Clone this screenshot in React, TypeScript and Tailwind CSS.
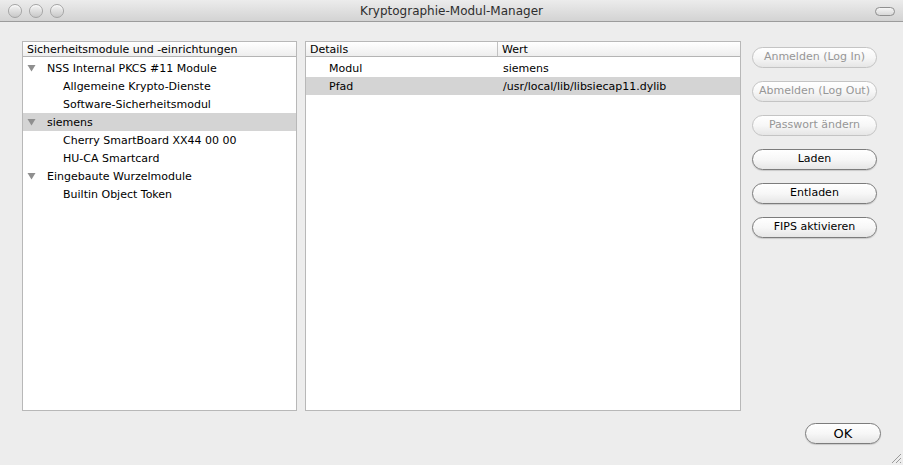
import React from "react";

const font = { fontFamily: '"DejaVu Sans", "Liberation Sans", sans-serif' };

function Tri() {
  return (
    <svg width="9" height="8" viewBox="0 0 9 8" className="shrink-0">
      <polygon points="0.5,1 8.5,1 4.5,7.5" fill="#8f8f8f" />
    </svg>
  );
}

function Light() {
  return (
    <div className="w-[14px] h-[14px] rounded-full border border-[#a4a4a4] bg-gradient-to-b from-[#f4f4f4] to-[#c9c9c9] shadow-[inset_0_1px_1px_rgba(255,255,255,0.9)]" />
  );
}

function Btn({ label, disabled }: { label: string; disabled?: boolean }) {
  return (
    <div
      className={
        "h-[21px] w-[125px] rounded-full border flex items-center justify-center text-[11px] bg-gradient-to-b from-white via-[#f7f7f7] to-[#e6e6e6] " +
        (disabled
          ? "border-[#c4c4c4] text-[#969696]"
          : "border-[#7c7c7c] text-black shadow-[0_1px_1px_rgba(0,0,0,0.15)]")
      }
    >
      {label}
    </div>
  );
}

type Row = { label: string; level: number; expander?: boolean; selected?: boolean };

const rows: Row[] = [
  { label: "NSS Internal PKCS #11 Module", level: 0, expander: true },
  { label: "Allgemeine Krypto-Dienste", level: 1 },
  { label: "Software-Sicherheitsmodul", level: 1 },
  { label: "siemens", level: 0, expander: true, selected: true },
  { label: "Cherry SmartBoard XX44 00 00", level: 1 },
  { label: "HU-CA Smartcard", level: 1 },
  { label: "Eingebaute Wurzelmodule", level: 0, expander: true },
  { label: "Builtin Object Token", level: 1 },
];

export default function App() {
  return (
    <div style={font} className="w-[903px] h-[465px] bg-[#ededed] relative overflow-hidden text-[11px] text-black">
      {/* title bar */}
      <div className="h-[22px] bg-gradient-to-b from-[#ececec] to-[#d3d3d3] border-b border-[#9c9c9c] flex items-center relative">
        <div className="flex gap-[7px] pl-[8px]">
          <Light />
          <Light />
          <Light />
        </div>
        <div className="absolute inset-0 flex items-center justify-center text-[12px] text-[#2e2e2e]">
          Kryptographie-Modul-Manager
        </div>
        <div className="absolute right-[8px] top-[7px] w-[20px] h-[9px] rounded-full border border-[#8f8f8f] bg-gradient-to-b from-[#f5f5f5] to-[#d8d8d8]" />
      </div>

      <div className="flex pt-[19px] pl-[22px]">
        {/* left tree */}
        <div className="w-[275px] h-[370px] bg-white border border-[#b8b8b8] flex flex-col">
          <div className="h-[15px] border-b border-[#b4b4b4] bg-gradient-to-b from-white to-[#eeeeee] flex items-center pl-[4px] leading-none">
            Sicherheitsmodule und -einrichtungen
          </div>
          <div className="pt-[2px]">
            {rows.map((r) => (
              <div
                key={r.label}
                className={"h-[18px] flex items-center leading-none " + (r.selected ? "bg-[#d4d4d4]" : "")}
              >
                {r.level === 0 ? (
                  <div className="pl-[4px] flex items-center">
                    <Tri />
                    <span className="pl-[11px]">{r.label}</span>
                  </div>
                ) : (
                  <span className="pl-[40px]">{r.label}</span>
                )}
              </div>
            ))}
          </div>
        </div>

        {/* right details */}
        <div className="ml-[8px] w-[436px] h-[370px] bg-white border border-[#b8b8b8] flex flex-col">
          <div className="h-[15px] border-b border-[#b4b4b4] bg-gradient-to-b from-white to-[#eeeeee] flex leading-none">
            <div className="w-[192px] border-r border-[#c2c2c2] flex items-center pl-[4px]">Details</div>
            <div className="flex items-center pl-[4px]">Wert</div>
          </div>
          <div className="pt-[2px]">
            <div className="h-[18px] flex items-center leading-none">
              <div className="w-[197px] pl-[23px]">Modul</div>
              <div>siemens</div>
            </div>
            <div className="h-[18px] flex items-center leading-none bg-[#d4d4d4]">
              <div className="w-[197px] pl-[23px]">Pfad</div>
              <div>/usr/local/lib/libsiecap11.dylib</div>
            </div>
          </div>
        </div>

        {/* buttons */}
        <div className="ml-[11px] pt-[6px] flex flex-col gap-[13px]">
          <Btn label="Anmelden (Log In)" disabled />
          <Btn label="Abmelden (Log Out)" disabled />
          <Btn label="Passwort ändern" disabled />
          <Btn label="Laden" />
          <Btn label="Entladen" />
          <Btn label="FIPS aktivieren" />
        </div>
      </div>

      <div className="flex justify-end pr-[22px] pt-[12px]">
        <div className="h-[21px] w-[76px] rounded-full border border-[#7c7c7c] bg-gradient-to-b from-white via-[#f7f7f7] to-[#e6e6e6] flex items-center justify-center text-[13px] shadow-[0_1px_1px_rgba(0,0,0,0.15)]">
          OK
        </div>
      </div>

      {/* resize grip */}
      <svg className="absolute right-[1px] bottom-[1px]" width="12" height="12" viewBox="0 0 12 12">
        <line x1="11" y1="2" x2="2" y2="11" stroke="#9a9a9a" strokeWidth="1" />
        <line x1="11" y1="6" x2="6" y2="11" stroke="#9a9a9a" strokeWidth="1" />
        <line x1="11" y1="10" x2="10" y2="11" stroke="#9a9a9a" strokeWidth="1" />
      </svg>
    </div>
  );
}
